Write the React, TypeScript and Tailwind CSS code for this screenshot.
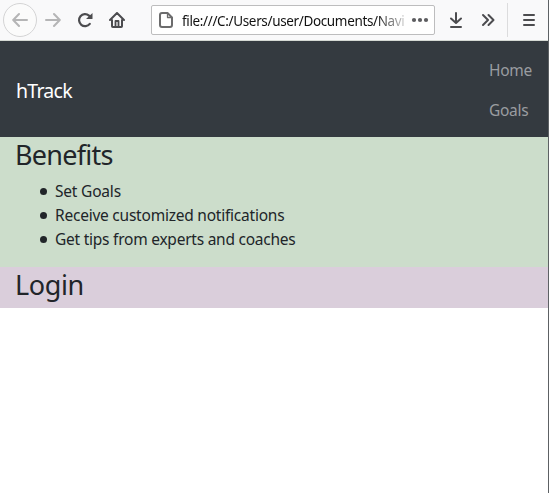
import React from "react";

const benefits = [
  { text: "Set Goals", style: "tracking-[-0.2px]" },
  { text: "Receive customized notifications", style: "tracking-[-0.23px]" },
  { text: "Get tips from experts and coaches", style: "tracking-[-0.24px]" },
];

function BackIcon() {
  return (
    <svg width="16" height="16" viewBox="0 0 16 16" fill="none" stroke="#b5b5b6" strokeWidth="2" strokeLinecap="round" strokeLinejoin="round">
      <path d="M15 8H1.500M7 2 1.200 8 7 14" />
    </svg>
  );
}

function ForwardIcon() {
  return (
    <svg width="16" height="16" viewBox="0 0 16 16" fill="none" stroke="#b5b5b6" strokeWidth="2" strokeLinecap="round" strokeLinejoin="round">
      <path d="M1 8h13.500M9 2l5.800 6L9 14" />
    </svg>
  );
}

function ReloadIcon() {
  return (
    <svg width="16" height="16" viewBox="0 0 16 16">
      <path d="M12.800 11.800A6 6 0 1 1 12 3.600L13.500 5" fill="none" stroke="#4c4c4f" strokeWidth="2.200" strokeLinecap="round" />
      <path d="M15.500 1v5.400a.6.6 0 0 1-.6.6H9z" fill="#4c4c4f" />
    </svg>
  );
}

function HomeIcon() {
  return (
    <svg width="16" height="16" viewBox="0 0 16 16" fill="none" stroke="#4c4c4f" strokeWidth="2" strokeLinecap="round" strokeLinejoin="round">
      <path d="M1 8l7-7 7 7M3 8v6.200c0 .5.3.8.8.8h8.400c.5 0 .8-.3.8-.8V8" />
      <path d="M6.500 14.500V9h3v5.500" strokeWidth="1.800" />
    </svg>
  );
}

function Toolbar() {
  return (
    <header className="flex h-[41px] items-start border-b border-[#d5d9d4] bg-[#f9f9fa] pl-[3px]">
      <div className="mt-[3px] flex size-[34px] items-center justify-center rounded-full border border-[#d4d4d5] bg-[#fbfbfb]">
        <BackIcon />
      </div>
      <div className="flex h-10 items-center pl-2"><ForwardIcon /></div>
      <div className="flex h-10 items-center pl-4"><ReloadIcon /></div>
      <div className="flex h-10 items-center pl-4"><HomeIcon /></div>
      <div className="mt-[5px] ml-[26px] flex h-[30px] w-[284px] items-center rounded-[2px] border border-[#bdbdbe] bg-white pl-[7px]">
        <svg width="14" height="16" viewBox="0 0 14 16" fill="none" stroke="#6c6c6d" strokeWidth="2" strokeLinejoin="round">
          <path d="M3 1h5.500L13 5.500V13a2 2 0 0 1-2 2H3a2 2 0 0 1-2-2V3a2 2 0 0 1 2-2z" />
          <path d="M8.500 1.500v4h4" strokeWidth="1.300" />
        </svg>
        <span className="mt-[2px] ml-[9px] w-[225px] bg-linear-to-r from-[#111] from-86% to-[#11111122] to-100% bg-clip-text text-[13.500px] leading-5 tracking-[-0.35px] whitespace-nowrap text-transparent">
          file:///C:/Users/user/Documents/Navi
        </span>
        <svg className="ml-1 shrink-0" width="18" height="6" viewBox="0 0 18 6" fill="#5c5c5f">
          <circle cx="3" cy="3" r="2.100" /><circle cx="9" cy="3" r="2.100" /><circle cx="15" cy="3" r="2.100" />
        </svg>
      </div>
      <div className="flex h-10 items-center pl-[13px]">
        <svg width="16" height="16" viewBox="0 0 16 16" fill="none" stroke="#4c4c4f" strokeWidth="2" strokeLinecap="round" strokeLinejoin="round">
          <path d="M8 1v9.500M3 6.500 8 11l5-4.500M3 15h10" />
        </svg>
      </div>
      <div className="flex h-10 items-center pl-4">
        <svg width="16" height="16" viewBox="0 0 16 16" fill="none" stroke="#4c4c4f" strokeWidth="2" strokeLinecap="round" strokeLinejoin="round">
          <path d="M3 3l5 5-5 5M8.500 3l5 5-5 5" />
        </svg>
      </div>
      <div className="mt-[3px] ml-[11px] h-[34px] w-px bg-[#dcdcdd]" />
      <div className="flex h-10 items-center pl-[13px]">
        <svg width="16" height="16" viewBox="0 0 16 16" fill="none" stroke="#4c4c4f" strokeWidth="2" strokeLinecap="round">
          <path d="M3 3h10M3 8h10M3 13h10" />
        </svg>
      </div>
    </header>
  );
}

export default function App() {
  return (
    <div className="flex h-[493px] w-[549px] overflow-hidden bg-white font-['Noto_Sans','Open_Sans',sans-serif] text-[#212529]">
      <div className="w-[548px]">
        <Toolbar />
        <nav className="flex h-24 items-center justify-between bg-[#343a40] px-4">
          <span className="pt-1 text-[19.500px] leading-[30px] tracking-[-0.75px] text-white">hTrack</span>
          <ul className="w-[43px] pt-[2px] text-[15.500px] leading-6 whitespace-nowrap text-[#9a9da0]">
            <li className="py-2 tracking-[-0.3px]">Home</li>
            <li className="py-2 tracking-[-0.3px]">Goals</li>
          </ul>
        </nav>
        <section className="h-[130px] bg-[#ccddcb] px-[15px]">
          <h3 className="mb-2 pt-px text-[27px] leading-[33px] tracking-[-0.75px]">Benefits</h3>
          <ul className="text-[15.500px] leading-6">
            {benefits.map((item) => (
              <li key={item.text} className="flex items-center pl-[25px]">
                <span className="mr-2 size-[7px] rounded-full bg-[#212529]" />
                <span className={item.style}>{item.text}</span>
              </li>
            ))}
          </ul>
        </section>
        <section className="h-[41px] bg-[#dacedb] px-[15px]">
          <h3 className="pt-px text-[27px] leading-[33px] tracking-[-0.4px]">Login</h3>
        </section>
      </div>
      <div className="w-px bg-[#5d6164]" />
    </div>
  );
}
